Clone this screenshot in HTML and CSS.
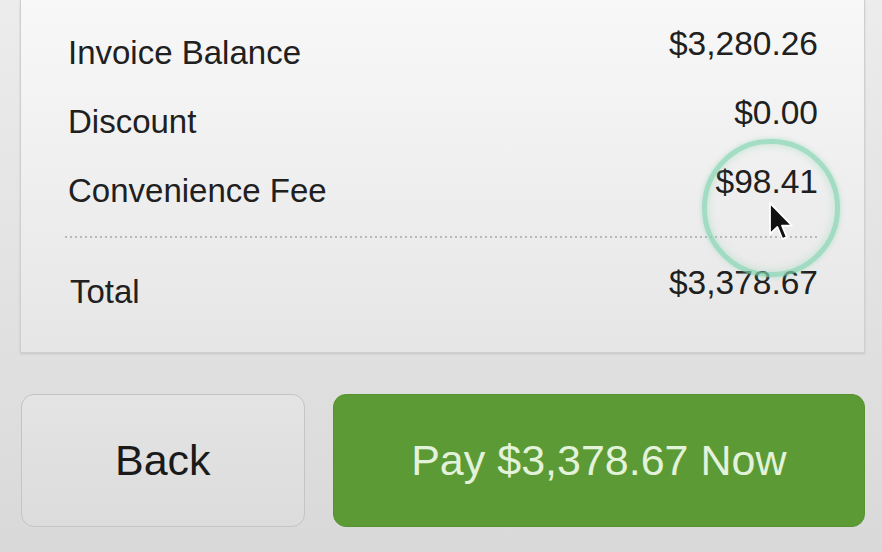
FILE: index.html
```html
<!DOCTYPE html>
<html>
<head>
<meta charset="utf-8">
<link rel="stylesheet" href="styles.css">
</head>
<body>
<div class="page">
  <div class="card">
    <div class="row">
      <span class="label">Invoice Balance</span>
      <span class="value">$3,280.26</span>
    </div>
    <div class="row">
      <span class="label">Discount</span>
      <span class="value">$0.00</span>
    </div>
    <div class="row last">
      <span class="label">Convenience Fee</span>
      <span class="value">$98.41</span>
    </div>
    <div class="divider"></div>
    <div class="row total">
      <span class="label">Total</span>
      <span class="value">$3,378.67</span>
    </div>
  </div>
  <div class="actions">
    <button class="btn back">Back</button>
    <button class="btn pay">Pay $3,378.67 Now</button>
  </div>
  <div class="click-ring"></div>
  <svg class="cursor" width="26" height="42" viewBox="0 0 13 21">
    <path d="M1 1 L1 16.5 L4.7 13 L7.2 19 L9.4 18.1 L7 12.3 L12 12.3 Z" fill="#111" stroke="#fff" stroke-width="0.9" stroke-linejoin="round"/>
  </svg>
</div>
</body>
</html>
```
FILE: styles.css
```css
html, body {
  margin: 0;
  padding: 0;
}
body {
  width: 882px;
  height: 552px;
  overflow: hidden;
  background: linear-gradient(#ececec, #d9d9d9);
  font-family: "Liberation Sans", Arial, sans-serif;
}
.page {
  position: relative;
  height: 552px;
  padding: 0 17px 0 20px;
}
.card {
  width: 845px;
  box-sizing: border-box;
  padding: 26px 46px 42px 47px;
  background: linear-gradient(#f8f8f8, #e6e6e6);
  border: 1px solid #cfcfcf;
  border-top: none;
  box-shadow: 0 1px 2px rgba(0,0,0,0.12);
}
.row {
  display: flex;
  justify-content: space-between;
  align-items: flex-start;
  margin-bottom: 24px;
  color: #202020;
}
.row.last {
  margin-bottom: 27px;
}
.row.total {
  margin-top: 27px;
  margin-bottom: 0;
}
.label {
  padding-top: 9px;
  font-size: 33px;
  line-height: 36px;
}
.total .label {
  padding-left: 2px;
}
.value {
  font-size: 33.5px;
  line-height: 36px;
}
.divider {
  height: 2px;
  background-image: repeating-linear-gradient(90deg, #b8b8b8 0 2px, transparent 2px 5px);
  margin-left: -3px;
  margin-right: -2px;
}
.actions {
  display: flex;
  gap: 28px;
  margin-top: 41px;
  padding-left: 1px;
}
.btn {
  height: 133px;
  border-radius: 13px;
  font-family: "Liberation Sans", Arial, sans-serif;
  font-size: 43px;
  padding: 0;
}
.back {
  width: 284px;
  background: linear-gradient(#e4e4e4, #dcdcdc);
  border: 1px solid #c4c4c4;
  color: #1a1a1a;
}
.pay {
  width: 533px;
  background: #5c9a35;
  border: 1px solid #56922f;
  color: #e3f2da;
}
.click-ring {
  position: absolute;
  left: 702px;
  top: 139px;
  width: 128px;
  height: 128px;
  border-radius: 50%;
  border: 5px solid rgba(130, 212, 176, 0.7);
  box-shadow: 0 0 5px rgba(130, 212, 176, 0.55), inset 0 0 8px rgba(130, 212, 176, 0.45);
}
.cursor {
  position: absolute;
  left: 768px;
  top: 201px;
}
```
